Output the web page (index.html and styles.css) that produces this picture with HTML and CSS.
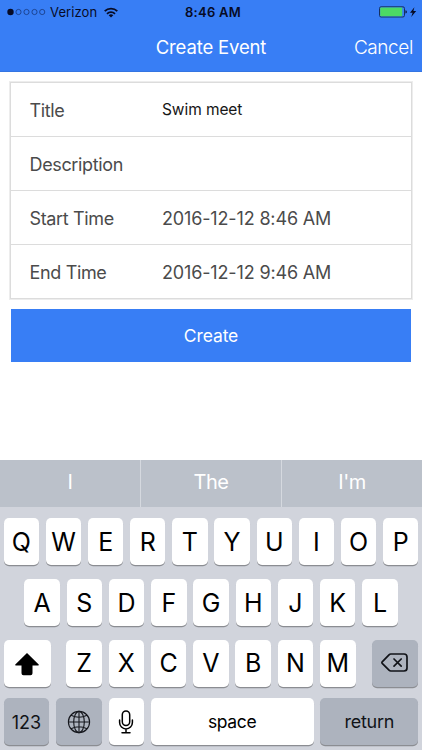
FILE: index.html
```html
<!DOCTYPE html>
<html lang="en">
<head>
<meta charset="utf-8">
<title>Create Event</title>
<link rel="stylesheet" href="styles.css">
</head>
<body>
<header class="header">
  <div class="status">
    <div class="carrier">
      <svg class="signal" width="40" height="8" viewBox="0 0 40 8"><circle cx="3.5" cy="4" r="3.2" fill="#070b25"/><g fill="none" stroke="#16377c" stroke-width=".8"><circle cx="11.5" cy="4" r="2.6"/><circle cx="19.5" cy="4" r="2.6"/><circle cx="27.5" cy="4" r="2.6"/><circle cx="35.2" cy="4" r="2.6"/></g></svg>
      <span class="carrier-name">Verizon</span>
      <svg class="wifi" width="14" height="11" viewBox="0 0 14 11"><g fill="none" stroke="#070b25" stroke-width="1.8"><path d="M.7 4.1a9 9 0 0 1 12.6 0"/><path d="M3 6.8a5.7 5.7 0 0 1 8 0"/></g><path d="M4.7 8.3a3.3 3.3 0 0 1 4.6 0L7 10.5z" fill="#070b25"/></svg>
    </div>
    <span class="clock">8:46 AM</span>
    <svg class="battery" width="38" height="12" viewBox="0 0 38 12"><rect x=".5" y=".8" width="25" height="10.2" rx="1.6" fill="#387ef5" stroke="#17305f"/><rect x="1.2" y="1.5" width="22" height="8.8" rx=".8" fill="#4cd964"/><path d="M26.5 4.2q1.3.3 1.3 1.7t-1.3 1.7z" fill="#070b25"/><path d="M35.4 1.2L31 6.7h2.6L32.2 11l5-6h-2.8z" fill="#070b25"/></svg>
  </div>
  <div class="nav"><h1 class="nav-title">Create Event</h1><span class="cancel">Cancel</span></div>
</header>
<main class="content">
  <div class="form">
    <div class="field"><span class="label">Title</span><span class="value entry">Swim meet</span></div>
    <div class="field"><span class="label">Description</span><span class="value"></span></div>
    <div class="field"><span class="label">Start Time</span><span class="value">2016-12-12 8:46 AM</span></div>
    <div class="field"><span class="label">End Time</span><span class="value">2016-12-12 9:46 AM</span></div>
  </div>
  <div class="create"><span>Create</span></div>
</main>
<section class="keyboard">
  <div class="suggestions"><span>I</span><span>The</span><span>I'm</span></div>
  <div class="keys">
    <div class="row"><b>Q</b><b>W</b><b>E</b><b>R</b><b>T</b><b>Y</b><b>U</b><b>I</b><b>O</b><b>P</b></div>
    <div class="row home"><b>A</b><b>S</b><b>D</b><b>F</b><b>G</b><b>H</b><b>J</b><b>K</b><b>L</b></div>
    <div class="row lower">
      <b class="shift"><svg width="26" height="24" viewBox="0 0 26 24"><path d="M13 1L24.7 12.6q.6.8-.4.8h-5.8v7.8q0 2-2 2h-7q-2 0-2-2v-7.8H1.7q-1 0-.4-.8z" fill="#000"/></svg></b>
      <b>Z</b><b>X</b><b>C</b><b>V</b><b>B</b><b>N</b><b>M</b>
      <b class="delete gray"><svg width="28" height="22" viewBox="0 0 28 22"><g fill="none" stroke="#111318" stroke-width="1.7" stroke-linejoin="round" stroke-linecap="round"><path d="M9.8 2H23q3 0 3 3v11q0 3-3 3H9.8q-1 0-1.8-.8L1.2 11.3q-.6-.8 0-1.5L8 2.8Q8.8 2 9.8 2z"/><path d="M13 7l7.2 7.2M20.2 7L13 14.2"/></g></svg></b>
    </div>
    <div class="row bottom">
      <b class="numbers gray">123</b>
      <b class="globe gray"><svg width="24" height="24" viewBox="0 0 24 24"><g fill="none" stroke="#15171d" stroke-width="1.1"><circle cx="12" cy="12" r="10.6"/><ellipse cx="12" cy="12" rx="5.3" ry="10.6"/><path d="M12 1.4v21.2M1.4 12h21.2M4 5.2q8 4 16 0M4 18.8q8-4 16 0"/></g></svg></b>
      <b class="mic"><svg width="16" height="24" viewBox="0 0 16 24"><g fill="none" stroke="#000" stroke-width="1.5" stroke-linecap="round"><rect x="4.3" y="1" width="7.4" height="14.5" rx="3.7"/><path d="M1.6 10v2.5a6.4 6.4 0 0 0 12.8 0V10M8 19v3.5M4 22.7h8"/></g></svg></b>
      <b class="space">space</b>
      <b class="return gray">return</b>
    </div>
  </div>
</section>
</body>
</html>
```
FILE: styles.css
```css
* { box-sizing: border-box; }
body {
  margin: 0;
  width: 422px;
  height: 750px;
  overflow: hidden;
  display: flex;
  flex-direction: column;
  background: #fff;
  font-family: Inter, "Liberation Sans", sans-serif;
}
svg { display: block; flex: none; }
.header { height: 72px; background: #387ef5; border-bottom: 1px solid #3475e2; }
.status {
  height: 24px;
  padding: 0 5px 0 7px;
  display: grid;
  grid-template-columns: 1fr auto 1fr;
  align-items: center;
  color: #070b25;
}
.carrier { display: flex; align-items: center; }
.carrier-name { margin: 0 7px 0 3px; font-size: 13px; letter-spacing: .1px; }
.clock { padding-left: 2px; font-size: 13px; font-weight: 600; letter-spacing: .25px; }
.battery { justify-self: end; }
.nav {
  height: 47px;
  padding: 0 9px;
  display: grid;
  grid-template-columns: 1fr auto 1fr;
  align-items: center;
  color: #fff;
  font-size: 19px;
}
.nav-title { grid-column: 2; margin: 0; padding-bottom: 1px; font-size: 18.5px; font-weight: 400; letter-spacing: -.15px; }
.cancel { justify-self: end; font-weight: 300; letter-spacing: -.4px; }
.content { flex: 1; padding: 10px 10px 0; }
.form { height: 217px; border: 1px solid #dcdcdc; outline: .5px solid #ededed; display: flex; flex-direction: column; }
.field { flex: 1; padding-left: 18.5px; display: flex; align-items: center; color: #4b4b4b; font-size: 18px; }
.field + .field { border-top: 1px solid #dcdcdc; }
.label { width: 132.5px; padding-top: 2px; letter-spacing: -.35px; }
.value { padding-top: 2px; white-space: pre; letter-spacing: -.15px; }
.entry { padding: 0; color: #161616; font-size: 15.5px; letter-spacing: -.08px; }
.create {
  height: 53px;
  margin: 10px 1px 0;
  display: flex;
  align-items: center;
  justify-content: center;
  background: #387ef5;
  color: #fff;
  font-size: 17.5px;
  letter-spacing: -.1px;
}
.keyboard { height: 290px; background: #d1d4dc; }
.suggestions { height: 47px; display: flex; background: #bbc1ca; color: #fff; font-size: 20px; letter-spacing: -.5px; }
.suggestions span { flex: 1; padding-bottom: 4px; display: flex; align-items: center; justify-content: center; }
.suggestions span + span { border-left: 1px solid #d5d9df; }
.keys { padding: 11.2px 3.7px 0; display: flex; flex-direction: column; gap: 13.5px; }
.row { display: flex; gap: 6.8px; }
.home { padding: 0 20.7px; }
.bottom { margin-top: -2.3px; }
.row b {
  flex: 1 0 0;
  min-width: 0;
  height: 47.2px;
  padding-top: 1px;
  display: flex;
  align-items: center;
  justify-content: center;
  border-radius: 5px;
  background: #fff;
  box-shadow: 0 1.2px 0 #8b8d92;
  color: #000;
  font-size: 25px;
  font-weight: 400;
}
.lower b { padding-top: 0; }
.row .shift { flex: 0 0 47.3px; margin-right: 8.5px; padding-top: 1px; }
.row .delete { flex: 0 0 46.7px; margin-left: 9.3px; }
.row .gray { background: #adb3be; color: #111318; }
.row .numbers { flex: 0 0 45.3px; padding-top: 2px; font-size: 18px; }
.row .globe { flex: 0 0 46px; padding: 0; }
.row .mic { flex: 0 0 35.4px; }
.row .space { padding: 0; font-size: 17.5px; letter-spacing: -.35px; }
.row .return { flex: 0 0 98px; padding: 0; font-size: 18px; letter-spacing: -.3px; }
```
